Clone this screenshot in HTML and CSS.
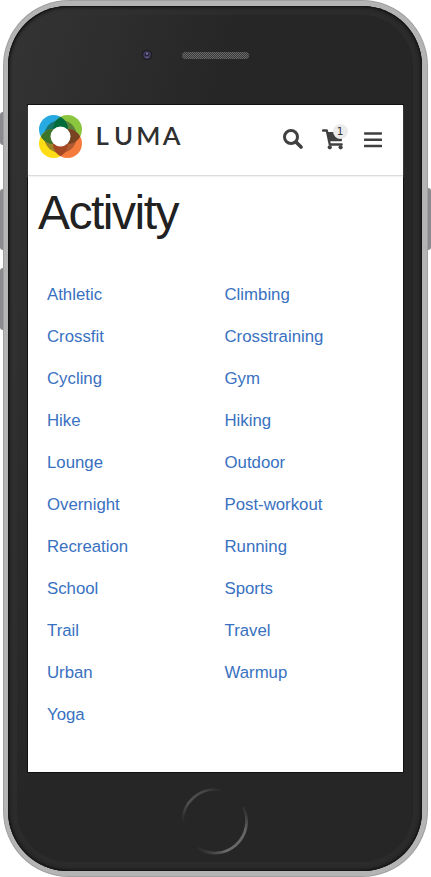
FILE: index.html
```html
<!DOCTYPE html>
<html lang="en">
<head>
<meta charset="utf-8">
<title>Activity - Luma</title>
<link rel="stylesheet" href="styles.css">
</head>
<body>
<div class="phone">
  <i class="key key-mute"></i><i class="key key-up"></i><i class="key key-down"></i><i class="key key-power"></i>
  <div class="frame">
    <div class="glass">
      <div class="face">
        <svg class="sensors" width="375" height="85" viewBox="0 0 375 85" aria-hidden="true">
          <defs>
            <pattern id="mesh" width="2" height="2" patternUnits="userSpaceOnUse"><rect width="2" height="2" fill="#3a3a3a"/><path d="M0 0h1v1H0zM1 1h1v1H1z" fill="#686868"/></pattern>
          </defs>
          <circle cx="119" cy="35" r="7.5" fill="#2c2c2c"/><circle cx="119" cy="35" r="5.5" fill="#202022"/>
          <circle cx="119" cy="35" r="3.7" fill="#443a60"/><circle cx="119" cy="35" r="2.2" fill="#242337"/>
          <circle cx="119" cy="33.8" r="1" fill="#8c86a2"/><path d="M117.6 36.8q1.4 1 2.8 0" stroke="#8579a5" fill="none"/>
          <rect x="154" y="32" width="67" height="7" rx="3.5" fill="url(#mesh)"/>
        </svg>
        <div class="screen">
          <header class="bar">
            <svg class="logo" width="160" height="56" viewBox="0 0 160 56" role="img" aria-label="Luma">
              <defs>
                <clipPath id="tl"><circle cx="25.5" cy="24.5" r="14.5"/></clipPath>
                <clipPath id="tr"><circle cx="39.5" cy="24.5" r="14.5"/></clipPath>
                <clipPath id="bl"><circle cx="25.5" cy="38.5" r="14.5"/></clipPath>
                <clipPath id="br"><circle cx="39.5" cy="38.5" r="14.5"/></clipPath>
              </defs>
              <circle cx="25.5" cy="24.5" r="14.5" fill="#27a9e1"/>
              <circle cx="39.5" cy="24.5" r="14.5" fill="#8cc63f"/>
              <circle cx="25.5" cy="38.5" r="14.5" fill="#fedd16"/>
              <circle cx="39.5" cy="38.5" r="14.5" fill="#f47b3c"/>
              <circle cx="32.5" cy="31.5" r="16.5" clip-path="url(#tl)" fill="#16776f"/>
              <circle cx="32.5" cy="31.5" r="16.5" clip-path="url(#tr)" fill="#5b8038"/>
              <circle cx="32.5" cy="31.5" r="16.5" clip-path="url(#bl)" fill="#9a8426"/>
              <circle cx="32.5" cy="31.5" r="16.5" clip-path="url(#br)" fill="#b25a30"/>
              <g clip-path="url(#tl)"><circle cx="39.5" cy="24.5" r="14.5" fill="#006b3b"/><circle cx="25.5" cy="38.5" r="14.5" fill="#3c7429"/></g>
              <g clip-path="url(#br)"><circle cx="39.5" cy="24.5" r="14.5" fill="#774321"/><circle cx="25.5" cy="38.5" r="14.5" fill="#a54924"/></g>
              <circle cx="32.5" cy="31.5" r="10" fill="#fff"/>
              <text class="wordmark" x="67.6 86 108.2 134.8" y="40.3">LUMA</text>
            </svg>
            <nav class="tools">
              <svg class="search" width="20" height="20" viewBox="0 0 20 20"><circle cx="8" cy="8" r="6.5" fill="none" stroke="#404040" stroke-width="3"/><path d="m13 13 5 5" stroke="#404040" stroke-width="3.6" stroke-linecap="round"/></svg>
              <span class="cart">
                <svg width="22" height="21" viewBox="0 0 22 21"><path d="M1 1.5h3.8l3 14h11.9" fill="none" stroke="#404040" stroke-width="2.3" stroke-linecap="round" stroke-linejoin="round"/><path d="M5 3h16l-1.3 9.3H7z" fill="#404040"/><circle cx="7.8" cy="18.3" r="2.1" fill="#404040"/><circle cx="18.6" cy="18.3" r="2.1" fill="#404040"/></svg>
                <b class="count">1</b>
              </span>
              <svg class="menu" width="18" height="16" viewBox="0 0 18 16"><path d="M.9 1.4h16.2M.9 7.7h16.2M.9 14h16.2" stroke="#404040" stroke-width="2.5" stroke-linecap="round"/></svg>
            </nav>
          </header>
          <h1>Activity</h1>
          <ul class="list">
            <li>Athletic</li><li>Climbing</li>
            <li>Crossfit</li><li>Crosstraining</li>
            <li>Cycling</li><li>Gym</li>
            <li>Hike</li><li>Hiking</li>
            <li>Lounge</li><li>Outdoor</li>
            <li>Overnight</li><li>Post-workout</li>
            <li>Recreation</li><li>Running</li>
            <li>School</li><li>Sports</li>
            <li>Trail</li><li>Travel</li>
            <li>Urban</li><li>Warmup</li>
            <li>Yoga</li>
          </ul>
        </div>
        <svg class="home" width="68" height="68" viewBox="0 0 68 68" aria-hidden="true">
          <defs>
            <linearGradient id="arcTop" gradientUnits="userSpaceOnUse" x1="2" y1="36" x2="40" y2="2"><stop offset="0" stop-color="#262626"/><stop offset=".35" stop-color="#505050"/><stop offset=".7" stop-color="#494949"/><stop offset="1" stop-color="#262626"/></linearGradient>
            <linearGradient id="arcLow" gradientUnits="userSpaceOnUse" x1="18" y1="62" x2="65" y2="20"><stop offset="0" stop-color="#2b2b2b"/><stop offset=".3" stop-color="#6a6a6a"/><stop offset=".75" stop-color="#646464"/><stop offset="1" stop-color="#262626"/></linearGradient>
          </defs>
          <path d="M1.9 38A32 32 0 0 1 40.5 3.3" fill="none" stroke="url(#arcTop)" stroke-width="2.6"/>
          <path d="M62.4 20A32 32 0 0 1 16.4 61" fill="none" stroke="url(#arcLow)" stroke-width="2.8"/>
        </svg>
      </div>
    </div>
  </div>
</div>
</body>
</html>
```

FILE: styles.css
```css
* { box-sizing: border-box; }
body { margin: 0; background: #fff; font-family: "Liberation Sans", Arial, sans-serif; overflow: hidden; }
.phone { position: relative; width: 431px; height: 877px; padding: 0 3.5px 0 2.5px; }
.frame {
  position: relative; height: 877px; padding: 1px;
  border-radius: 66px; background: #a0a0a0;
}
.glass {
  height: 875px; padding: 5px 4.5px; border-radius: 65px;
  background: #b4b4b4;
}
.face {
  display: flex; flex-direction: column; align-items: center;
  height: 865px; padding: 14px 0 0; border-radius: 60px;
  background: linear-gradient(105deg, #343434 0, #2e2e2e 16%, #262626 36%, #262626 100%);
  box-shadow: inset 0 0 0 1px #171717, inset 0 0 3px 2px #1b1b1b, inset 0 0 0 9px rgba(50, 50, 50, .45);
}
.sensors { flex: none; display: block; }
.screen { flex: none; width: 375px; height: 667px; background: #fff; box-shadow: 0 0 0 1px #111; }
.bar {
  display: flex; justify-content: space-between; align-items: flex-start;
  height: 71px; padding-right: 21px; border-bottom: 1px solid #dcdcdc; box-shadow: 0 1px 1px #f4f4f4;
}
.logo { display: block; }
.wordmark { font: 600 25.8px Lato, sans-serif; fill: #303030; }
.tools { display: flex; align-items: flex-start; padding-top: 24px; }
.tools svg { display: block; }
.cart { position: relative; margin: 0 20px 0 19px; }
.count {
  position: absolute; left: 11px; top: -5px; width: 15px; height: 15px; border-radius: 50%;
  background: #ebebeb; color: #333; font: 10.5px/15px "DejaVu Sans", sans-serif; text-align: center;
}
.menu { margin-top: 3px; }
h1 { margin: 8px 0 0 10.5px; font-size: 48px; line-height: 58px; font-weight: 400; letter-spacing: -1.5px; color: #212121; }
.list {
  display: grid; grid-template-columns: 177.5px 1fr; grid-auto-rows: 42px;
  margin: 32px 0 0 19.5px; padding: 0; list-style: none;
  font-size: 16.8px; line-height: 42px; color: #3871c1;
}
.home { flex: none; display: block; margin: 15px 0 0; }
.key { position: absolute; width: 4px; background: #8b8b8f; }
.key-mute { left: 0; top: 112px; height: 33px; border-radius: 3px 0 0 3px; }
.key-up { left: 0; top: 189px; height: 61px; border-radius: 3px 0 0 3px; }
.key-down { left: 0; top: 268px; height: 62px; border-radius: 3px 0 0 3px; }
.key-power { left: 427px; top: 188px; height: 62px; border-radius: 0 3px 3px 0; }
```
